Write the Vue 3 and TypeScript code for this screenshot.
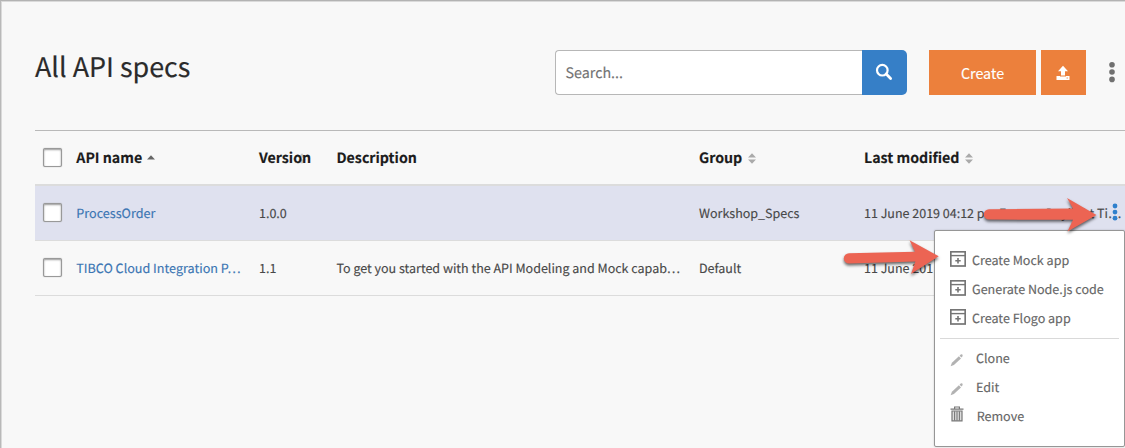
<script setup lang="ts">
interface ApiRow {
  name: string
  version: string
  description: string
  group: string
  modified: string
  selected: boolean
}

const rows: ApiRow[] = [
  { name: 'ProcessOrder', version: '1.0.0', description: '', group: 'Workshop_Specs', modified: '11 June 2019 04:12 pm Eastern Daylight Ti…', selected: true },
  { name: 'TIBCO Cloud Integration P…', version: '1.1', description: 'To get you started with the API Modeling and Mock capab…', group: 'Default', modified: '11 June 201', selected: false },
]

const appActions: string[] = ['Create Mock app', 'Generate Node.js code', 'Create Flogo app']
const editActions: string[] = ['Clone', 'Edit']
</script>

<template>
  <main class="page">
    <header class="toolbar">
      <h1 class="title">All API specs</h1>
      <div class="search">
        <div class="search-field">Search...</div>
        <button class="search-btn" aria-label="Search">
          <svg width="18" height="18" viewBox="0 0 18 18" fill="none" stroke="#fff">
            <circle cx="7.3" cy="7.2" r="5.3" stroke-width="2.2" />
            <path d="M11.2 11.1L15.6 15.4" stroke-width="2.8" stroke-linecap="round" />
          </svg>
        </button>
      </div>
      <button class="create">Create</button>
      <button class="upload" aria-label="Upload">
        <svg width="14" height="16" viewBox="0 0 14 16" fill="#fff">
          <path d="M7 .8L12 6.2H9V10.5H5V6.2H2Z" />
          <path d="M.5 11H4V11.5H10V11H13.5V15H.5Z" />
          <path d="M10.5 13H12" stroke="#ec803c" stroke-width=".8" />
        </svg>
      </button>
      <svg class="kebab" width="6" height="22" viewBox="0 0 6 22" fill="#707070">
        <circle cx="3" cy="3.8" r="2.8" /><circle cx="3" cy="11" r="2.8" /><circle cx="3" cy="18.4" r="2.8" />
      </svg>
    </header>

    <section class="table">
      <div class="row head">
        <span class="check"></span>
        <span class="cell">API name<svg class="up" width="8" height="5" viewBox="0 0 8 5"><path d="M0 4.5L4 .3L8 4.5Z" fill="#666" /></svg></span>
        <span class="cell version">Version<svg class="sort hidden-sort" width="8" height="11" viewBox="0 0 8 11" fill="#aaa"><path d="M0 4.6L4 .3L8 4.6ZM0 6.4H8L4 10.7Z" /></svg></span>
        <span class="cell">Description</span>
        <span class="cell">Group<svg class="sort" width="8" height="11" viewBox="0 0 8 11" fill="#aaa"><path d="M0 4.6L4 .3L8 4.6ZM0 6.4H8L4 10.7Z" /></svg></span>
        <span class="cell">Last modified<svg class="sort" width="8" height="11" viewBox="0 0 8 11" fill="#aaa"><path d="M0 4.6L4 .3L8 4.6ZM0 6.4H8L4 10.7Z" /></svg></span>
      </div>
      <div v-for="row in rows" :key="row.name" class="row" :class="{ selected: row.selected }">
        <span class="check"></span>
        <span class="cell link">{{ row.name }}</span>
        <span class="cell">{{ row.version }}</span>
        <span class="cell">{{ row.description }}</span>
        <span class="cell">{{ row.group }}</span>
        <span class="cell">{{ row.modified }}</span>
      </div>
    </section>

    <nav class="menu">
      <div v-for="label in appActions" :key="label" class="item">
        <svg class="app-icon" width="16" height="16" viewBox="0 0 16 16" fill="none" stroke="#757575">
          <rect x=".8" y=".8" width="14.4" height="14.2" stroke-width="1.7" />
          <path d="M1 4.6H15" stroke-width="1.4" />
          <path d="M8 7V12.4M5.3 9.7H10.7" stroke-width="1.6" />
        </svg>
        <span>{{ label }}</span>
      </div>
      <hr class="rule" />
      <div v-for="label in editActions" :key="label" class="item lower">
        <svg class="pencil" width="14" height="14" viewBox="0 0 14 14" fill="#b2b2b2">
          <path d="M.6 13.2L1.9 9.8L8.9 3.3L11 5.4L3.9 12Z" />
          <path d="M9.6 2.7L10.7 1.5Q11.5.9 12.3 1.6Q13 2.4 12.4 3.3L11.5 4.6Z" />
        </svg>
        <span>{{ label }}</span>
      </div>
      <div class="item remove">
        <svg class="trash" width="14" height="16" viewBox="0 0 14 16" fill="none" stroke="#777">
          <path d="M.5 3.2H13.5M4.6 2.8V1H9.4V2.8" stroke-width="1.2" />
          <path d="M2 5V14.8H12V5Z" fill="#ddd" stroke-width="1.2" />
          <path d="M4.6 5.2V14.5M7 5.2V14.5M9.4 5.2V14.5" stroke-width="1.1" />
        </svg>
        <span>Remove</span>
      </div>
    </nav>

    <svg class="overlay" width="1125" height="448" viewBox="0 0 1125 448">
      <g class="arrow" fill="#ec6453">
        <path d="M989 209.2L1073 208.6L1067 198L1096.5 215L1067.5 231.5L1073 219.8L989 219.6A5.2 5.2 0 0 1 989 209.2Z" />
        <path d="M849 253.2L915 251.8L909.6 240.2L938.7 256.2L911 274L915.4 261.4L849 263.6A5.2 5.2 0 0 1 849 253.2Z" />
      </g>
      <g fill="#2f80cc">
        <circle cx="1115" cy="206" r="2.4" /><circle cx="1115" cy="212.1" r="2.4" /><circle cx="1115" cy="218.2" r="2.4" />
      </g>
    </svg>
  </main>
</template>

<style>
body { background: #f8f8f8; }
</style>

<style scoped>
* { box-sizing: border-box; }
.page {
  position: relative;
  width: 1125px;
  height: 448px;
  overflow: hidden;
  background: #f8f8f8;
  border-top: 1px solid #b3b3b3;
  border-left: 1px solid #b9b9b9;
  box-shadow: inset 1px 1px 0 #dadada;
  font-family: "Noto Sans CJK SC", "Noto Sans", sans-serif;
  font-size: 12.5px;
  line-height: 20px;
  text-rendering: geometricPrecision;
  -webkit-text-stroke: .15px;
  color: #484848;
}
.toolbar {
  display: flex;
  align-items: flex-start;
  height: 129px;
  padding: 49px 0 0 34px;
}
.title {
  flex: 0 0 520px;
  margin: -1px 0 0;
  font-size: 26.9px;
  font-weight: 400;
  line-height: 34px;
  color: #2b2b2b;
}
.search { display: flex; width: 352px; height: 45px; margin-right: 22px; }
.search-field {
  flex: 1;
  padding: 0 9.5px;
  border: 1px solid #b7b7b7;
  border-right: 0;
  border-radius: 4px 0 0 4px;
  background: #fff;
  font-size: 14.3px;
  line-height: 43px;
  color: #747474;
}
button { border: 0; margin: 0; padding: 0; font-family: inherit; }
.search-btn {
  display: flex;
  align-items: center;
  justify-content: center;
  width: 45px;
  padding: 0 2px 1px 0;
  border-radius: 0 5px 5px 0;
  background: #367fc7;
}
.create { width: 107px; height: 45px; margin-right: 5px; background: #ec803c; color: #fff; font-size: 14.3px; line-height: 46px; }
.upload { display: flex; align-items: center; justify-content: center; width: 45px; height: 45px; padding: 0 1px 0 0; background: #ec803c; }
.kebab { margin: 11px 0 0 23px; }
.table { margin-left: 34px; border-top: 1px solid #b9b9b9; }
.row {
  display: grid;
  grid-template-columns: 41.3px 182.7px 77.5px 362.5px 165px 261px;
  align-items: center;
  height: 55px;
  border-bottom: 1px solid #dcdcdc;
}
.head { height: 55px; border-bottom: 2px solid #dcdcdc; font-size: 14.2px; font-weight: 700; color: #1b1b1b; }
.selected { background: #dfe1ef; }
.check {
  width: 19px;
  height: 19px;
  margin-left: 8px;
  border: 1.4px solid #999;
  border-radius: 2px;
  background: #fff;
  box-shadow: inset 0 1px 2px #999, 0 0 1px #999;
}
.row:not(.head) .check { margin-top: -1px; }
.cell { white-space: nowrap; }
.link { color: #3b75b3; font-size: 12.6px; }
.version { position: relative; z-index: 0; }
.up { margin: 0 0 3px 5px; }
.sort { margin: 0 0 -1px 6px; }
.hidden-sort { position: absolute; left: 33px; top: 5px; z-index: -1; opacity: .6; }
.menu {
  position: absolute;
  left: 933px;
  top: 229px;
  width: 191px;
  height: 217px;
  padding: 15px 5px 0;
  border: 1px solid #969696;
  border-radius: 2px;
  background: #fff;
  box-shadow: 0 0 2px rgba(0, 0, 0, .2);
  font-size: 12.55px;
  color: #666;
}
.item { display: flex; align-items: center; height: 29px; padding-left: 10px; }
.item span { margin-top: -2px; }
.app-icon { margin: -3px 6.5px 0 -.5px; }
.rule { height: 1px; margin: 5px 0 5px; border: 0; background: #d9d9d9; }
.pencil { margin: 3px 12px 0 0; }
.trash { margin: -5px 12.7px 0 0; }
.overlay { position: absolute; left: -1px; top: -1px; }
.arrow { filter: drop-shadow(0 2px 1.5px rgba(0, 0, 0, .6)); }
</style>
